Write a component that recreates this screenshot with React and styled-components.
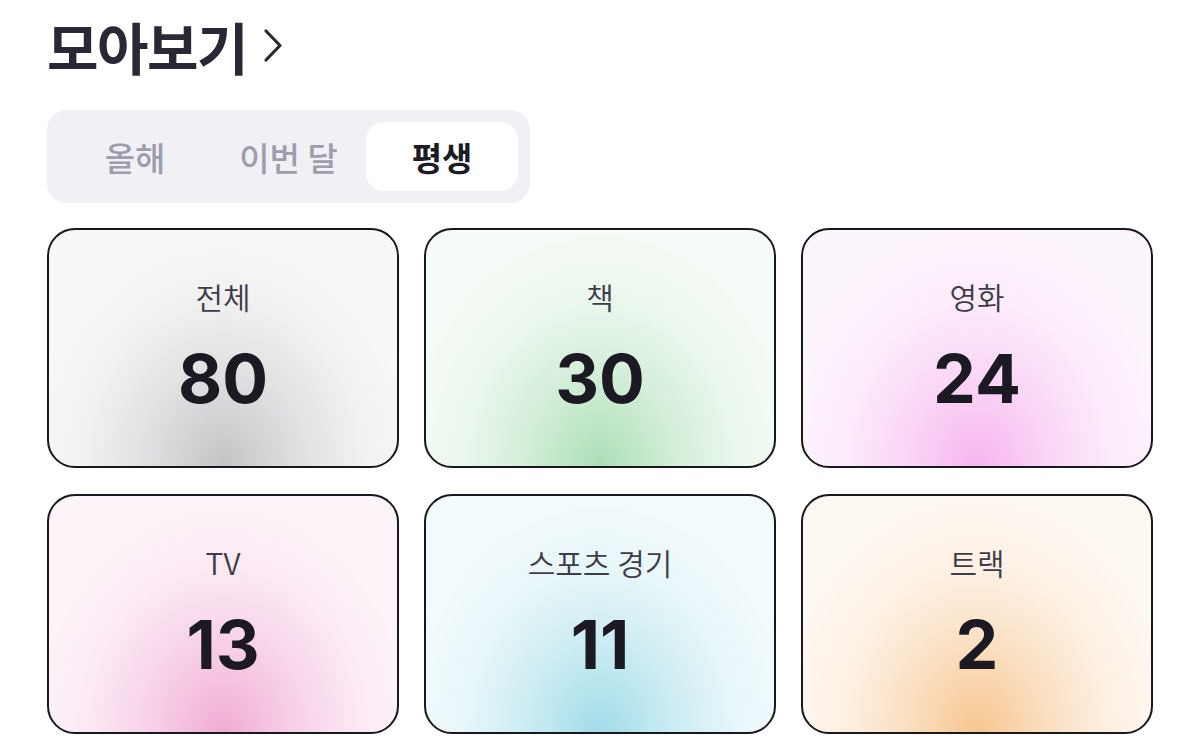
import React from "react";
import styled, { createGlobalStyle } from "styled-components";

const GlobalStyle = createGlobalStyle`
  body {
    margin: 0;
    background: #ffffff;
    font-family: "Noto Sans CJK KR", "Noto Sans", sans-serif;
  }
`;

const Page = styled.div`
  padding: 8px 47px 0;
  display: flex;
  flex-direction: column;
  align-items: flex-start;
`;

const TitleRow = styled.div`
  display: flex;
  align-items: center;
  gap: 16px;
  height: 76px;
`;

const Title = styled.h1`
  margin: 0;
  font-size: 56px;
  font-weight: 700;
  letter-spacing: -1.5px;
  color: #292935;
  line-height: 76px;
`;

const Chevron = styled.svg`
  width: 20px;
  height: 36px;
`;

const Segment = styled.div`
  margin-top: 26px;
  display: grid;
  grid-template-columns: repeat(3, 152px);
  column-gap: 1.5px;
  padding: 12px;
  background: #f1f1f5;
  border-radius: 20px;
`;

const Tab = styled.button`
  border: none;
  height: 69px;
  border-radius: 18px;
  font-family: inherit;
  font-size: 33px;
  font-weight: ${({ $active }) => ($active ? 700 : 500)};
  color: ${({ $active }) => ($active ? "#1c1b25" : "#9e9dac")};
  background: ${({ $active }) => ($active ? "#ffffff" : "transparent")};
  padding: 0;
  cursor: pointer;
`;

const Grid = styled.div`
  margin-top: 25px;
  display: grid;
  grid-template-columns: repeat(3, 352px);
  column-gap: 25px;
  row-gap: 26px;
`;

const Card = styled.div`
  box-sizing: border-box;
  height: 240px;
  border: 2px solid #19181f;
  border-radius: 28px;
  display: flex;
  flex-direction: column;
  align-items: center;
  padding-top: 46px;
  background:
    radial-gradient(
      ellipse 56% 100% at 50% 100%,
      ${({ $tint }) => $tint} 0%,
      ${({ $tint }) => $tint}b0 22%,
      ${({ $tint }) => $tint}66 45%,
      ${({ $tint }) => $tint}26 70%,
      ${({ $tint }) => $tint}00 100%
    ),
    ${({ $base }) => $base};
`;

const Label = styled.div`
  font-size: 30px;
  font-weight: 350;
  line-height: 40px;
  color: #3d3c48;
`;

const Count = styled.div`
  margin-top: 20px;
  font-family: "Inter", "Noto Sans", sans-serif;
  font-size: 68px;
  font-weight: 700;
  line-height: 84px;
  color: #1b1a22;
`;

const stats = [
  { label: "전체", count: 80, tint: "#c4c4c7", base: "#f8f8f8" },
  { label: "책", count: 30, tint: "#acdfb7", base: "#f5fbf6" },
  { label: "영화", count: 24, tint: "#f7b5ef", base: "#fdf5fd" },
  { label: "TV", count: 13, tint: "#f1acd4", base: "#fdf4f9" },
  { label: "스포츠 경기", count: 11, tint: "#a0dce8", base: "#f4fbfc" },
  { label: "트랙", count: 2, tint: "#f7c690", base: "#fef8f2" },
];

const tabs = ["올해", "이번 달", "평생"];

export default function App() {
  return (
    <>
      <GlobalStyle />
      <Page>
        <TitleRow>
          <Title>모아보기</Title>
          <Chevron viewBox="0 0 20 36" fill="none">
            <path d="M3 3 L17 17.5 L3 32" stroke="#292935" strokeWidth="3.2" strokeLinecap="round" strokeLinejoin="round" />
          </Chevron>
        </TitleRow>
        <Segment>
          {tabs.map((t) => (
            <Tab key={t} $active={t === "평생"}>
              {t}
            </Tab>
          ))}
        </Segment>
        <Grid>
          {stats.map((s) => (
            <Card key={s.label} $tint={s.tint} $base={s.base}>
              <Label>{s.label}</Label>
              <Count>{s.count}</Count>
            </Card>
          ))}
        </Grid>
      </Page>
    </>
  );
}
